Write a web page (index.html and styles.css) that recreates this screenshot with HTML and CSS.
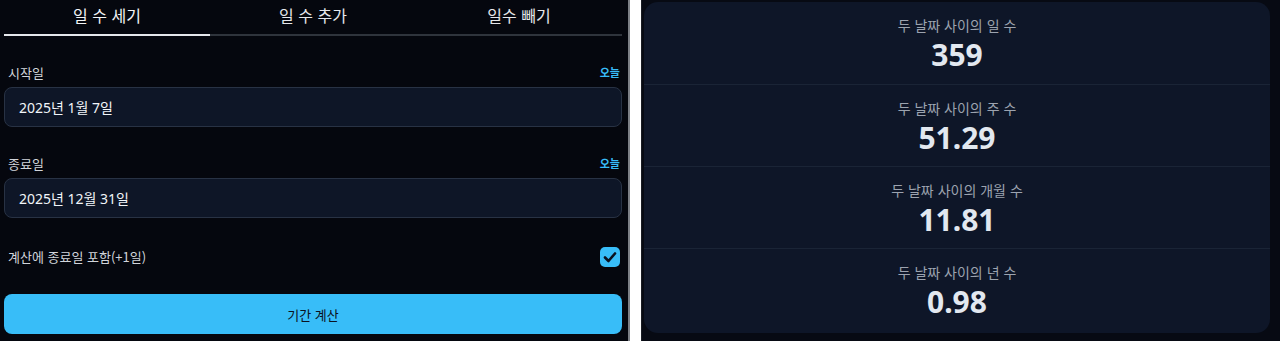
FILE: index.html
```html
<!DOCTYPE html>
<html lang="ko">
<head>
<meta charset="utf-8">
<title>날짜 계산기</title>
<link rel="stylesheet" href="styles.css">
</head>
<body>
<div class="page">
  <section class="left">
    <nav class="tabs">
      <div class="tab active">일 수 세기</div>
      <div class="tab">일 수 추가</div>
      <div class="tab">일수 빼기</div>
    </nav>
    <div class="field first">
      <div class="label-row"><span class="label">시작일</span><span class="today">오늘</span></div>
      <div class="input">2025년 1월 7일</div>
    </div>
    <div class="field">
      <div class="label-row"><span class="label">종료일</span><span class="today">오늘</span></div>
      <div class="input">2025년 12월 31일</div>
    </div>
    <div class="check-row">
      <span class="label">계산에 종료일 포함(+1일)</span>
      <span class="checkbox"><svg viewBox="0 0 20 20" width="20" height="20"><path d="M5 10.5 L8.5 14 L15 6.5" fill="none" stroke="#0b1220" stroke-width="2.6" stroke-linecap="round" stroke-linejoin="round"/></svg></span>
    </div>
    <button class="calc">기간 계산</button>
  </section>
  <div class="divider"></div>
  <section class="right">
    <div class="card">
      <div class="row"><div class="rlabel">두 날짜 사이의 일 수</div><div class="rvalue">359</div></div>
      <div class="row"><div class="rlabel">두 날짜 사이의 주 수</div><div class="rvalue">51.29</div></div>
      <div class="row"><div class="rlabel">두 날짜 사이의 개월 수</div><div class="rvalue">11.81</div></div>
      <div class="row"><div class="rlabel">두 날짜 사이의 년 수</div><div class="rvalue">0.98</div></div>
    </div>
  </section>
</div>
</body>
</html>
```

FILE: styles.css
```css
* { box-sizing: border-box; }
html, body { margin: 0; padding: 0; }
body {
  background: #ffffff;
  font-family: "Noto Sans", "Noto Sans CJK KR", sans-serif;
  width: 1280px;
  height: 341px;
  overflow: hidden;
}
.page {
  display: flex;
  height: 341px;
}
.left {
  width: 630px;
  height: 341px;
  background: #05070e;
  border-right: 2px solid #7d8086;
  padding: 0 6px 0 4px;
  display: flex;
  flex-direction: column;
}
.divider {
  width: 11px;
  background: #ffffff;
}
.right {
  width: 639px;
  height: 341px;
  background: #070a13;
  border-left: 1px solid #1a1d24;
  padding: 2px 10px 0 2px;
}
.tabs {
  display: flex;
  height: 36px;
}
.tab {
  flex: 1;
  text-align: center;
  font-family: "Noto Sans CJK KR", sans-serif;
  font-size: 16px;
  line-height: 31px;
  color: #e5e7eb;
  border-bottom: 2px solid #2f343c;
}
.tab.active {
  color: #f3f4f6;
  border-bottom-color: #e5e7eb;
}
.field { margin-top: 26px; }
.label-row {
  display: flex;
  justify-content: space-between;
  align-items: center;
  height: 20px;
  padding: 0 2px 0 4px;
  margin-bottom: 5px;
}
.label {
  font-family: "Noto Sans CJK KR", sans-serif;
  font-size: 13px;
  color: #d1d5db;
}
.today {
  font-family: "Noto Sans CJK KR", sans-serif;
  font-size: 11px;
  font-weight: 700;
  color: #38bdf8;
}
.input {
  height: 40px;
  background: #0e1627;
  border: 1px solid #283244;
  border-radius: 8px;
  padding: 0 14px;
  display: flex;
  align-items: center;
  font-size: 14px;
  color: #f1f5f9;
}
.check-row {
  margin-top: 28px;
  height: 21px;
  display: flex;
  align-items: center;
  justify-content: space-between;
  padding: 0 2px 0 4px;
}
.checkbox {
  width: 20px;
  height: 20px;
  border-radius: 5px;
  background: #38bdf8;
  display: flex;
}
.calc {
  margin-top: 27px;
  height: 40px;
  width: 100%;
  border: none;
  border-radius: 8px;
  background: #38bdf8;
  color: #0b1220;
  font-family: "Noto Sans CJK KR", sans-serif;
  font-size: 13px;
  padding: 0;
}
.card {
  background: #0e1628;
  border-radius: 14px;
  height: 331px;
  overflow: hidden;
}
.row {
  height: 82px;
  padding-top: 13px;
  text-align: center;
}
.row + .row { border-top: 1px solid #1a2436; }
.rlabel {
  font-family: "Noto Sans CJK KR", sans-serif;
  font-size: 14px;
  line-height: 20px;
  color: #9ca3af;
}
.rvalue {
  margin-top: 2px;
  font-size: 30px;
  line-height: 36px;
  font-weight: 700;
  color: #e2e8f0;
}
```
